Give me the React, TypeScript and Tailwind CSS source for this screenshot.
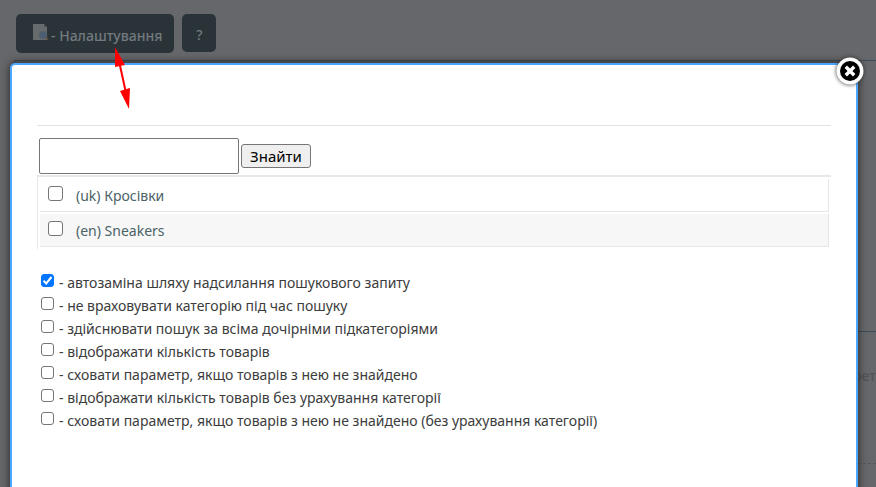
import { useState } from "react";

const categories = [
  { id: "uk", label: "(uk) Кросівки", row: "bg-white" },
  { id: "en", label: "(en) Sneakers", row: "bg-[#f7f7f7]" },
];

const options = [
  "автозаміна шляху надсилання пошукового запиту",
  "не враховувати категорію під час пошуку",
  "здійснювати пошук за всіма дочірніми підкатегоріями",
  "відображати кількість товарів",
  "сховати параметр, якщо товарів з нею не знайдено",
  "відображати кількість товарів без урахування категорії",
  "сховати параметр, якщо товарів з нею не знайдено (без урахування категорії)",
];

const boxStyle =
  "shrink-0 appearance-none rounded-[3px] border border-[#767676] bg-white checked:border-[#0075ff] checked:bg-[#0075ff]";

function PageSearchIcon() {
  return (
    <svg width="18" height="18" viewBox="0 0 18 18" aria-hidden="true">
      <path d="M1 1h11l3 3v13H1z" fill="#666b6e" />
      <path d="M12 1v3h3z" fill="#454e53" />
      <path d="M13 14l3 2.500" stroke="#66503c" strokeWidth="2" />
      <circle cx="11" cy="12" r="3.800" fill="#4a5e70" stroke="#56636d" />
    </svg>
  );
}

function CloseIcon() {
  return (
    <svg width="30" height="30" viewBox="0 0 30 30" aria-hidden="true">
      <circle cx="15" cy="15" r="13.500" fill="#fff" />
      <circle cx="15" cy="15" r="10" fill="#000" />
      <path d="M10.800 10.800l8.400 8.400M19.200 10.800l-8.400 8.400" stroke="#fff" strokeWidth="3.400" />
    </svg>
  );
}

function Option({ label, initial }: { label: string; initial: boolean }) {
  const [checked, setChecked] = useState(initial);
  return (
    <label className="flex h-[23px] items-start gap-[5px]">
      <span className="relative h-[13px] w-[13px] shrink-0">
        <input
          type="checkbox"
          checked={checked}
          onChange={() => setChecked(!checked)}
          className={`${boxStyle} block h-[13px] w-[13px]`}
        />
        {checked && (
          <svg className="pointer-events-none absolute inset-0" width="13" height="13" viewBox="0 0 13 13">
            <path d="M2.500 6.800l2.700 2.700 5.300-6.500" fill="none" stroke="#fff" strokeWidth="2" />
          </svg>
        )}
      </span>
      <span className="leading-[18px]">- {label}</span>
    </label>
  );
}

export default function App() {
  return (
    <div className="relative h-screen overflow-hidden bg-[#66676a] font-['Noto_Sans','Open_Sans',sans-serif] text-sm text-[#3c3c3c]">
      <div className="flex h-full flex-col">
        <header className="flex items-start gap-2 px-4 pt-[14px] pb-[7px] font-medium text-[#737a7f]">
          <button className="flex h-[39px] items-center gap-px rounded-[5px] bg-[#2a3338] pr-3 pl-4">
            <span className="pb-1">
              <PageSearchIcon />
            </span>
            <span className="pt-1">- Налаштування</span>
          </button>
          <button className="h-[38px] w-[34px] rounded-[5px] bg-[#2a3338] pt-1">?</button>
        </header>
        <main className="ml-[14px] flex-1 border-t border-l border-[#3d4b59]">
          <div className="h-[271px] border-b border-[#3d4b59]" />
          <div className="flex h-[132px] justify-end border-b border-dashed border-[#55575a] pt-[34px] font-medium text-[#525457]">
            <span>рет</span>
          </div>
        </main>
      </div>

      <section
        role="dialog"
        aria-label="Налаштування"
        className="absolute top-[63px] right-[18px] -bottom-2 left-[10px] rounded-[5px] border-2 border-[#4da6ff] bg-white px-[25px] pt-[60px] shadow-[0_0_8px_#222]"
      >
        <button aria-label="Закрити" className="absolute -top-[9px] -right-[9px] rounded-full drop-shadow-[0_0_2px_#333]">
          <CloseIcon />
        </button>
        <hr className="border-[#e2e4e4]" />
        <form className="flex items-center gap-[2px] px-[2px] pt-3 pb-px" onSubmit={(e) => e.preventDefault()}>
          <input
            type="text"
            aria-label="Пошук"
            className="h-9 w-[200px] rounded-[2px] border border-[#767676] bg-white px-2"
          />
          <button className="h-6 w-[70px] rounded-[3px] border border-[#767676] bg-[#efefef] text-[15px] leading-5 text-black">
            Знайти
          </button>
        </form>
        <table className="w-full border-separate border-spacing-[2px] border-t-2 border-l border-[#e7e9e9] text-[#4a6268]">
          <tbody>
            {categories.map((c) => (
              <tr key={c.id} className={c.row}>
                <td className="h-[33px] border-r border-b border-[#e4e7e7] p-0">
                  <label className="flex h-8 items-start gap-[13px] pt-[7px] pl-2">
                    <input type="checkbox" className={`${boxStyle} h-[15px] w-[15px]`} />
                    <span className="leading-5">{c.label}</span>
                  </label>
                </td>
              </tr>
            ))}
          </tbody>
        </table>
        <div className="pt-[25px] pl-1">
          {options.map((label, i) => (
            <Option key={label} label={label} initial={i === 0} />
          ))}
        </div>
      </section>

      <svg
        className="pointer-events-none absolute top-[47px] left-[112px]"
        width="22"
        height="64"
        viewBox="0 0 22 64"
        aria-hidden="true"
      >
        <path d="M7 14L14 46" stroke="#f00" strokeWidth="2" />
        <path d="M3 0l10 18-10 2zM8 44l10-3-1 21z" fill="#f00" />
      </svg>
    </div>
  );
}
